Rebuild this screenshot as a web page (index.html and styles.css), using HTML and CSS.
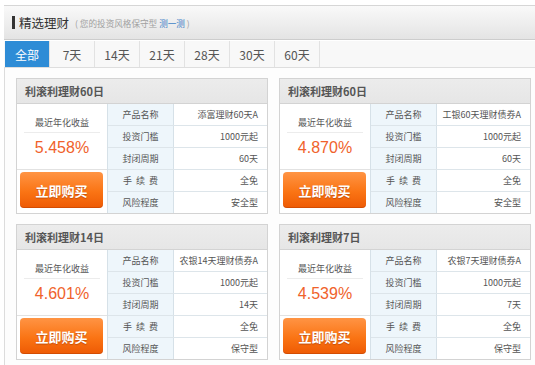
FILE: index.html
```html
<!DOCTYPE html>
<html lang="zh-CN">
<head>
<meta charset="utf-8">
<title>精选理财</title>
<link rel="stylesheet" href="styles.css">
</head>
<body>
<div class="page">
  <div class="head">
    <span class="bar"></span>
    <span class="title">精选理财</span>
    <span class="sub">( 您的投资风格保守型 <span class="test">测一测</span> )</span>
  </div>
  <div class="tabs">
    <span class="tab active">全部</span>
    <span class="tab">7天</span>
    <span class="tab">14天</span>
    <span class="tab">21天</span>
    <span class="tab">28天</span>
    <span class="tab">30天</span>
    <span class="tab">60天</span>
  </div>
  <div class="content">
    <div class="grid">
      <div class="card">
        <div class="card-h">利滚利理财60日</div>
        <div class="card-b">
          <div class="left">
            <div class="rate">
              <div class="rate-l">最近年化收益</div>
              <div class="rate-v">5.458%</div>
            </div>
            <div class="buy"><span class="btn">立即购买</span></div>
          </div>
          <div class="table">
            <div class="row"><span class="k">产品名称</span><span class="v">添富理财60天A</span></div>
            <div class="row"><span class="k">投资门槛</span><span class="v">1000元起</span></div>
            <div class="row"><span class="k">封闭周期</span><span class="v">60天</span></div>
            <div class="row"><span class="k">手 续 费</span><span class="v">全免</span></div>
            <div class="row"><span class="k">风险程度</span><span class="v">安全型</span></div>
          </div>
        </div>
      </div>
      <div class="card">
        <div class="card-h">利滚利理财60日</div>
        <div class="card-b">
          <div class="left">
            <div class="rate">
              <div class="rate-l">最近年化收益</div>
              <div class="rate-v">4.870%</div>
            </div>
            <div class="buy"><span class="btn">立即购买</span></div>
          </div>
          <div class="table">
            <div class="row"><span class="k">产品名称</span><span class="v">工银60天理财债券A</span></div>
            <div class="row"><span class="k">投资门槛</span><span class="v">1000元起</span></div>
            <div class="row"><span class="k">封闭周期</span><span class="v">60天</span></div>
            <div class="row"><span class="k">手 续 费</span><span class="v">全免</span></div>
            <div class="row"><span class="k">风险程度</span><span class="v">安全型</span></div>
          </div>
        </div>
      </div>
      <div class="card">
        <div class="card-h">利滚利理财14日</div>
        <div class="card-b">
          <div class="left">
            <div class="rate">
              <div class="rate-l">最近年化收益</div>
              <div class="rate-v">4.601%</div>
            </div>
            <div class="buy"><span class="btn">立即购买</span></div>
          </div>
          <div class="table">
            <div class="row"><span class="k">产品名称</span><span class="v">农银14天理财债券A</span></div>
            <div class="row"><span class="k">投资门槛</span><span class="v">1000元起</span></div>
            <div class="row"><span class="k">封闭周期</span><span class="v">14天</span></div>
            <div class="row"><span class="k">手 续 费</span><span class="v">全免</span></div>
            <div class="row"><span class="k">风险程度</span><span class="v">保守型</span></div>
          </div>
        </div>
      </div>
      <div class="card">
        <div class="card-h">利滚利理财7日</div>
        <div class="card-b">
          <div class="left">
            <div class="rate">
              <div class="rate-l">最近年化收益</div>
              <div class="rate-v">4.539%</div>
            </div>
            <div class="buy"><span class="btn">立即购买</span></div>
          </div>
          <div class="table">
            <div class="row"><span class="k">产品名称</span><span class="v">农银7天理财债券A</span></div>
            <div class="row"><span class="k">投资门槛</span><span class="v">1000元起</span></div>
            <div class="row"><span class="k">封闭周期</span><span class="v">7天</span></div>
            <div class="row"><span class="k">手 续 费</span><span class="v">全免</span></div>
            <div class="row"><span class="k">风险程度</span><span class="v">保守型</span></div>
          </div>
        </div>
      </div>
    </div>
  </div>
</div>
</body>
</html>
```

FILE: styles.css
```css
html, body {
  margin: 0;
  padding: 0;
  background: #fff;
  overflow: hidden;
}
body {
  font-family: "Noto Sans CJK SC", "Noto Sans", sans-serif;
  color: #333;
}
.page {
  margin: 5px 0 0 4px;
  width: 540px;
}
.head {
  height: 33px;
  border-top: 1px solid #d6d6d6;
  border-bottom: 1px solid #cdcdcd;
  background: linear-gradient(#f9f9f9, #e4e4e4);
  display: flex;
  align-items: center;
  padding-left: 8px;
}
.bar {
  width: 3px;
  height: 13px;
  background: #333;
  margin-right: 4px;
}
.title {
  font-size: 12.5px;
  color: #333;
}
.sub {
  font-size: 8.6px;
  color: #a0a0a0;
  margin-left: 6px;
}
.test {
  color: #3b7ec6;
}
.tabs {
  margin-top: 1px;
  display: flex;
  height: 26px;
  padding-left: 1px;
  background: #f8f8f8;
  border-bottom: 1px solid #dedede;
}
.tab {
  width: 44px;
  border-right: 1px solid #e2e2e2;
  display: flex;
  align-items: center;
  justify-content: center;
  font-size: 12px;
  color: #555;
}
.tab.active {
  background: #2e8cd6;
  color: #fff;
}
.content {
  border-left: 1px solid #dcdcdc;
  background: #fdfdfd;
  padding: 10px 0 0 11px;
  height: 300px;
}
.grid {
  display: grid;
  grid-template-columns: 252px 252px;
  column-gap: 11px;
  row-gap: 10px;
}
.card {
  border: 1px solid #d3d3d3;
  background: #fff;
}
.card-h {
  height: 24px;
  line-height: 24px;
  border-bottom: 1px solid #d3d3d3;
  background: linear-gradient(#ececec, #e6e6e6);
  font-size: 11px;
  font-weight: bold;
  color: #555;
  padding-left: 8px;
}
.card-b {
  display: flex;
}
.left {
  width: 90px;
  border-right: 1px solid #d6e1e8;
  display: flex;
  flex-direction: column;
}
.rate {
  height: 65px;
  border-bottom: 1px solid #e2e2e2;
}
.rate-l {
  margin: 0 7px;
  padding-top: 9px;
  line-height: 19px;
  border-bottom: 1px solid #ececec;
  font-size: 9px;
  color: #555;
  text-align: center;
}
.rate-v {
  line-height: 30px;
  text-align: center;
  font-family: "Liberation Sans", Arial, sans-serif;
  font-size: 16px;
  color: #f0622b;
}
.buy {
  height: 43px;
  padding: 2px 4px 0 3px;
  box-sizing: border-box;
}
.btn {
  display: flex;
  align-items: center;
  justify-content: center;
  height: 36px;
  border-radius: 4px;
  background: linear-gradient(#ff9444, #fa7414 55%, #ee5a04);
  box-shadow: inset 0 -1px 0 rgba(160, 50, 0, 0.35);
  color: #fff;
  font-size: 13px;
  font-weight: bold;
  text-shadow: 0 1px 1px rgba(150, 50, 0, 0.5);
}
.table {
  flex: 1;
  display: flex;
  flex-direction: column;
}
.row {
  display: flex;
  height: 21px;
  border-bottom: 1px solid #dde5ea;
}
.row:last-child {
  border-bottom: none;
}
.k {
  width: 65px;
  flex: none;
  background: #eef6fb;
  border-right: 1px solid #d6e1e8;
  display: flex;
  align-items: center;
  justify-content: center;
  font-size: 9px;
  word-spacing: 2px;
  color: #555;
}
.v {
  flex: 1;
  display: flex;
  align-items: center;
  justify-content: flex-end;
  padding-right: 9px;
  font-size: 9px;
  color: #555;
}
```
